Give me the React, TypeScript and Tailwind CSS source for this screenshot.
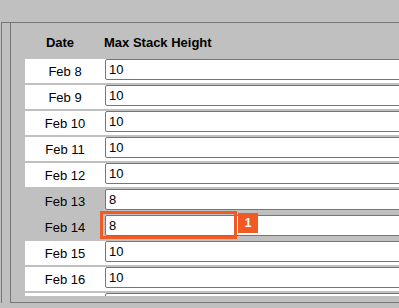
const rows = [
    { date: 'Feb 8', value: '10', changed: false },
    { date: 'Feb 9', value: '10', changed: false },
    { date: 'Feb 10', value: '10', changed: false },
    { date: 'Feb 11', value: '10', changed: false },
    { date: 'Feb 12', value: '10', changed: false },
    { date: 'Feb 13', value: '8', changed: true },
    { date: 'Feb 14', value: '8', changed: true, marked: true },
    { date: 'Feb 15', value: '10', changed: false },
    { date: 'Feb 16', value: '10', changed: false },
    { date: 'Feb 17', value: '10', changed: false },
]

const App = () => {
    return (
        <div
            className="h-[308px] w-[399px] overflow-hidden bg-[#c0c0c0] pt-[22px] text-black"
            style={{ fontFamily: '"Liberation Sans", Arial, sans-serif' }}
        >
            <div className="ml-px w-[480px] border-l border-t border-[#777] pl-[8px]">
                <div className="w-[470px] border-b border-l border-[#777] pb-[6px]">
                    <div className="h-[273px] overflow-hidden">
                        <div className="flex h-[34px] whitespace-nowrap pt-[12px] text-[13px] font-bold leading-[15px]">
                            <div className="ml-[9px] w-[80px] shrink-0 text-center">Date</div>
                            <div className="ml-[4px]">Max Stack Height</div>
                        </div>
                        <div className="mt-[2px] flex flex-col gap-[2px]">
                            {rows.map((row) => (
                                <div
                                    key={row.date}
                                    className={`ml-[14px] flex h-[24px] items-start ${
                                        row.changed ? '' : 'bg-white'
                                    }`}
                                >
                                    <div className="flex h-[24px] w-[80px] shrink-0 items-center justify-center whitespace-nowrap text-[13px] leading-[15px]">
                                        {row.date}
                                    </div>
                                    <div className="relative shrink-0">
                                        <input
                                            type="text"
                                            defaultValue={row.value}
                                            className="block h-[21px] w-[360px] rounded-[2px] border border-[#767676] bg-white pl-[3px] text-[13px] leading-[15px] text-black outline-none"
                                        />
                                        {row.marked && (
                                            <>
                                                <div className="absolute left-[-5px] top-[-4px] h-[28px] w-[137px] border-[3px] border-[#f15a24]" />
                                                <div className="absolute left-[133px] top-[-2px] flex h-[20px] w-[20px] items-center justify-center bg-[#f15a24] text-[12px] font-bold leading-none text-white">
                                                    1
                                                </div>
                                            </>
                                        )}
                                    </div>
                                </div>
                            ))}
                        </div>
                    </div>
                </div>
            </div>
        </div>
    )
}

export default App
